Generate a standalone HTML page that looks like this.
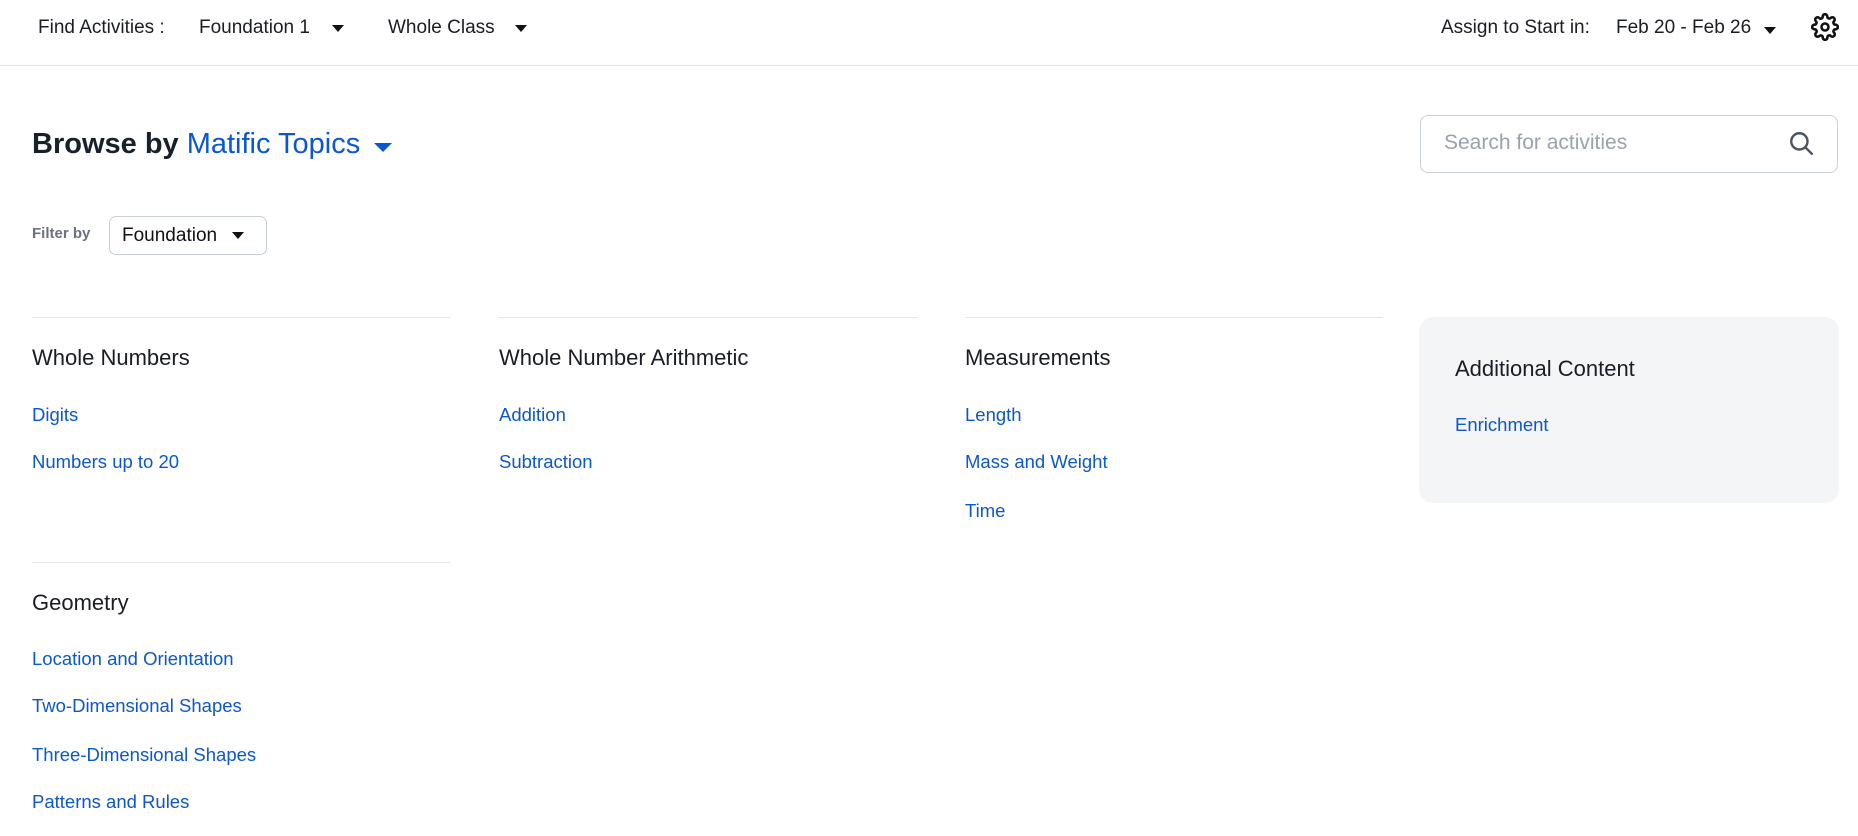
<!DOCTYPE html>
<html><head><meta charset="utf-8"><style>
*{margin:0;padding:0;box-sizing:border-box}
body{width:1858px;height:836px;background:#fff;font-family:"Liberation Sans",sans-serif;color:#1a1d24;position:relative;overflow:hidden}
.a{position:absolute;white-space:nowrap;line-height:1}
.tri{display:inline-block;width:0;height:0;border-left:6px solid transparent;border-right:6px solid transparent;border-top:7px solid #111;vertical-align:top}
.hd{font-size:19px;color:#1a1d24}
.line{position:absolute;height:1px;background:#e3e5e8;width:418px}
.h2{font-size:22px;color:#1a1d24}
.lk{font-size:18.5px;color:#0b57d0}
</style></head><body>
<div style="position:absolute;left:0;top:65px;width:1858px;height:1px;background:#e3e5e8"></div>
<div class="a hd" style="left:38px;top:18px">Find Activities :</div>
<div class="a hd" style="left:199px;top:18px">Foundation 1</div>
<div class="a" style="left:332px;top:25px"><span class="tri"></span></div>
<div class="a hd" style="left:388px;top:18px">Whole Class</div>
<div class="a" style="left:515px;top:25px"><span class="tri"></span></div>
<div class="a hd" style="left:1441px;top:18px">Assign to Start in:</div>
<div class="a hd" style="left:1616px;top:18px">Feb 20 - Feb 26</div>
<div class="a" style="left:1764px;top:27px"><span class="tri"></span></div>
<svg class="a" style="left:1811px;top:13px" width="28" height="28" viewBox="0 0 24 24" fill="none" stroke="#111" stroke-width="2.2"><circle cx="12" cy="12" r="3"/><path d="M19.4 15a1.65 1.65 0 0 0 .33 1.82l.06.06a2 2 0 1 1-2.83 2.83l-.06-.06a1.65 1.65 0 0 0-1.820-.33 1.65 1.65 0 0 0-1 1.51V21a2 2 0 1 1-4 0v-.09A1.65 1.65 0 0 0 9 19.4a1.65 1.65 0 0 0-1.82.33l-.06.06a2 2 0 1 1-2.83-2.83l.06-.06A1.65 1.65 0 0 0 4.68 15a1.65 1.65 0 0 0-1.51-1H3a2 2 0 1 1 0-4h.09A1.65 1.65 0 0 0 4.6 9a1.65 1.65 0 0 0-.33-1.82l-.06-.06a2 2 0 1 1 2.830-2.83l.06.06A1.65 1.65 0 0 0 9 4.68a1.65 1.65 0 0 0 1-1.51V3a2 2 0 1 1 4 0v.09a1.65 1.65 0 0 0 1 1.51 1.65 1.65 0 0 0 1.82-.33l.06-.06a2 2 0 1 1 2.83 2.83l-.06.06A1.65 1.65 0 0 0 19.4 9a1.65 1.65 0 0 0 1.51 1H21a2 2 0 1 1 0 4h-.09a1.65 1.65 0 0 0-1.51 1z"/></svg>

<div class="a" style="left:32px;top:130px;font-size:29px;font-weight:bold;color:#17202b">Browse by <span style="font-weight:normal;color:#0b57d0">Matific Topics</span></div>
<div class="a" style="left:374px;top:143px"><span class="tri" style="border-left-width:9px;border-right-width:9px;border-top:9px solid #0b57d0"></span></div>

<div style="position:absolute;left:1420px;top:115px;width:418px;height:58px;border:1px solid #c9cfd6;border-radius:8px"></div>
<div class="a" style="left:1444px;top:132px;font-size:21px;color:#9aa2ad">Search for activities</div>
<svg class="a" style="left:1788px;top:130px" width="26" height="26" viewBox="0 0 24 24" fill="none" stroke="#4a5360" stroke-width="2.2"><circle cx="10.5" cy="10.5" r="7.5"/><path d="M16 16l6 6" stroke-linecap="round"/></svg>

<div class="a" style="left:32px;top:226px;font-size:15px;font-weight:bold;color:#6b7280">Filter by</div>
<div style="position:absolute;left:109px;top:216px;width:158px;height:39px;border:1px solid #c9cfd6;border-radius:7px"></div>
<div class="a" style="left:122px;top:226px;font-size:19px;color:#111">Foundation</div>
<div class="a" style="left:232px;top:232px"><span class="tri"></span></div>

<div class="line" style="left:32px;top:317px"></div>
<div class="line" style="left:499px;top:317px"></div>
<div class="line" style="left:965px;top:317px"></div>
<div class="a h2" style="left:32px;top:347px">Whole Numbers</div>
<div class="a lk" style="left:32px;top:406px">Digits</div>
<div class="a lk" style="left:32px;top:453px">Numbers up to 20</div>
<div class="a h2" style="left:499px;top:347px">Whole Number Arithmetic</div>
<div class="a lk" style="left:499px;top:406px">Addition</div>
<div class="a lk" style="left:499px;top:453px">Subtraction</div>
<div class="a h2" style="left:965px;top:347px">Measurements</div>
<div class="a lk" style="left:965px;top:406px">Length</div>
<div class="a lk" style="left:965px;top:453px">Mass and Weight</div>
<div class="a lk" style="left:965px;top:502px">Time</div>

<div style="position:absolute;left:1419px;top:317px;width:420px;height:186px;background:#f4f5f7;border-radius:14px"></div>
<div class="a h2" style="left:1455px;top:358px">Additional Content</div>
<div class="a lk" style="left:1455px;top:416px">Enrichment</div>

<div class="line" style="left:32px;top:562px"></div>
<div class="a h2" style="left:32px;top:592px">Geometry</div>
<div class="a lk" style="left:32px;top:650px">Location and Orientation</div>
<div class="a lk" style="left:32px;top:697px">Two-Dimensional Shapes</div>
<div class="a lk" style="left:32px;top:746px">Three-Dimensional Shapes</div>
<div class="a lk" style="left:32px;top:793px">Patterns and Rules</div>
</body></html>
